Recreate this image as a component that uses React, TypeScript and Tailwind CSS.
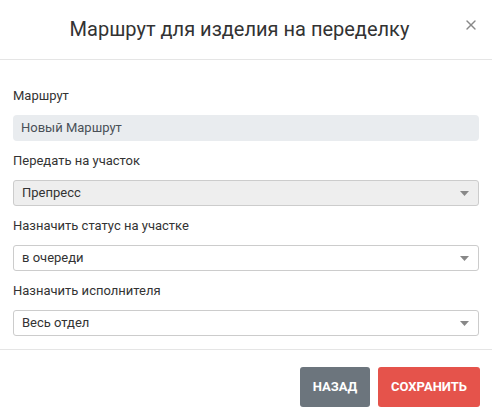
import { X } from 'lucide-react'

function Caret() {
  return (
    <svg width="9" height="5" viewBox="0 0 9 5" className="shrink-0">
      <path d="M0 0 L9 0 L4.5 5 Z" fill="#888888" />
    </svg>
  )
}

function Field({ label, children }: { label: string; children: React.ReactNode }) {
  return (
    <div>
      <div className="h-5 leading-5 mb-[9px] text-[13px] text-[#333333]">{label}</div>
      {children}
    </div>
  )
}

function Select({ value, disabled }: { value: string; disabled?: boolean }) {
  return (
    <div
      className={`h-[26px] flex items-center justify-between pl-2 pr-[9px] border border-[#cccccc] rounded-[3px] text-[13px] text-[#333333] ${
        disabled ? 'bg-[#eeeeee]' : 'bg-white'
      }`}
    >
      <span>{value}</span>
      <Caret />
    </div>
  )
}

export default function App() {
  return (
    <div className="w-[492px] h-[420px] bg-white flex flex-col" style={{ fontFamily: 'Roboto, "Noto Sans", sans-serif' }}>
      {/* Header */}
      <div className="h-[60px] border-b border-[#e5e5e5] flex items-center pl-[14px] pr-[13px] shrink-0">
        <h3 className="flex-1 text-center text-[20px] text-[#333333] pb-[1px] pl-[2px]">Маршрут для изделия на переделку</h3>
        <X className="w-4 h-4 text-[#888888] -mt-[9px]" strokeWidth={2} />
      </div>

      {/* Body */}
      <div className="flex flex-col gap-[10px] pt-[26px] pb-[13px] px-[13px]">
        <Field label="Маршрут">
          <div className="h-[26px] flex items-center px-2 rounded-[4px] bg-[#e9ecef] text-[13px] text-[#495057]">
            Новый Маршрут
          </div>
        </Field>
        <Field label="Передать на участок">
          <Select value="Препресс" disabled />
        </Field>
        <Field label="Назначить статус на участке">
          <Select value="в очереди" />
        </Field>
        <Field label="Назначить исполнителя">
          <Select value="Весь отдел" />
        </Field>
      </div>

      {/* Footer */}
      <div className="border-t border-[#e5e5e5] flex justify-end gap-2 pt-[17px] px-[12px]">
        <button className="h-10 w-[70px] rounded-[3px] bg-[#6c757d] text-white text-[13px] font-bold uppercase">
          Назад
        </button>
        <button className="h-10 w-[102px] rounded-[3px] bg-[#e5534b] text-white text-[13px] font-bold uppercase">
          Сохранить
        </button>
      </div>
    </div>
  )
}
